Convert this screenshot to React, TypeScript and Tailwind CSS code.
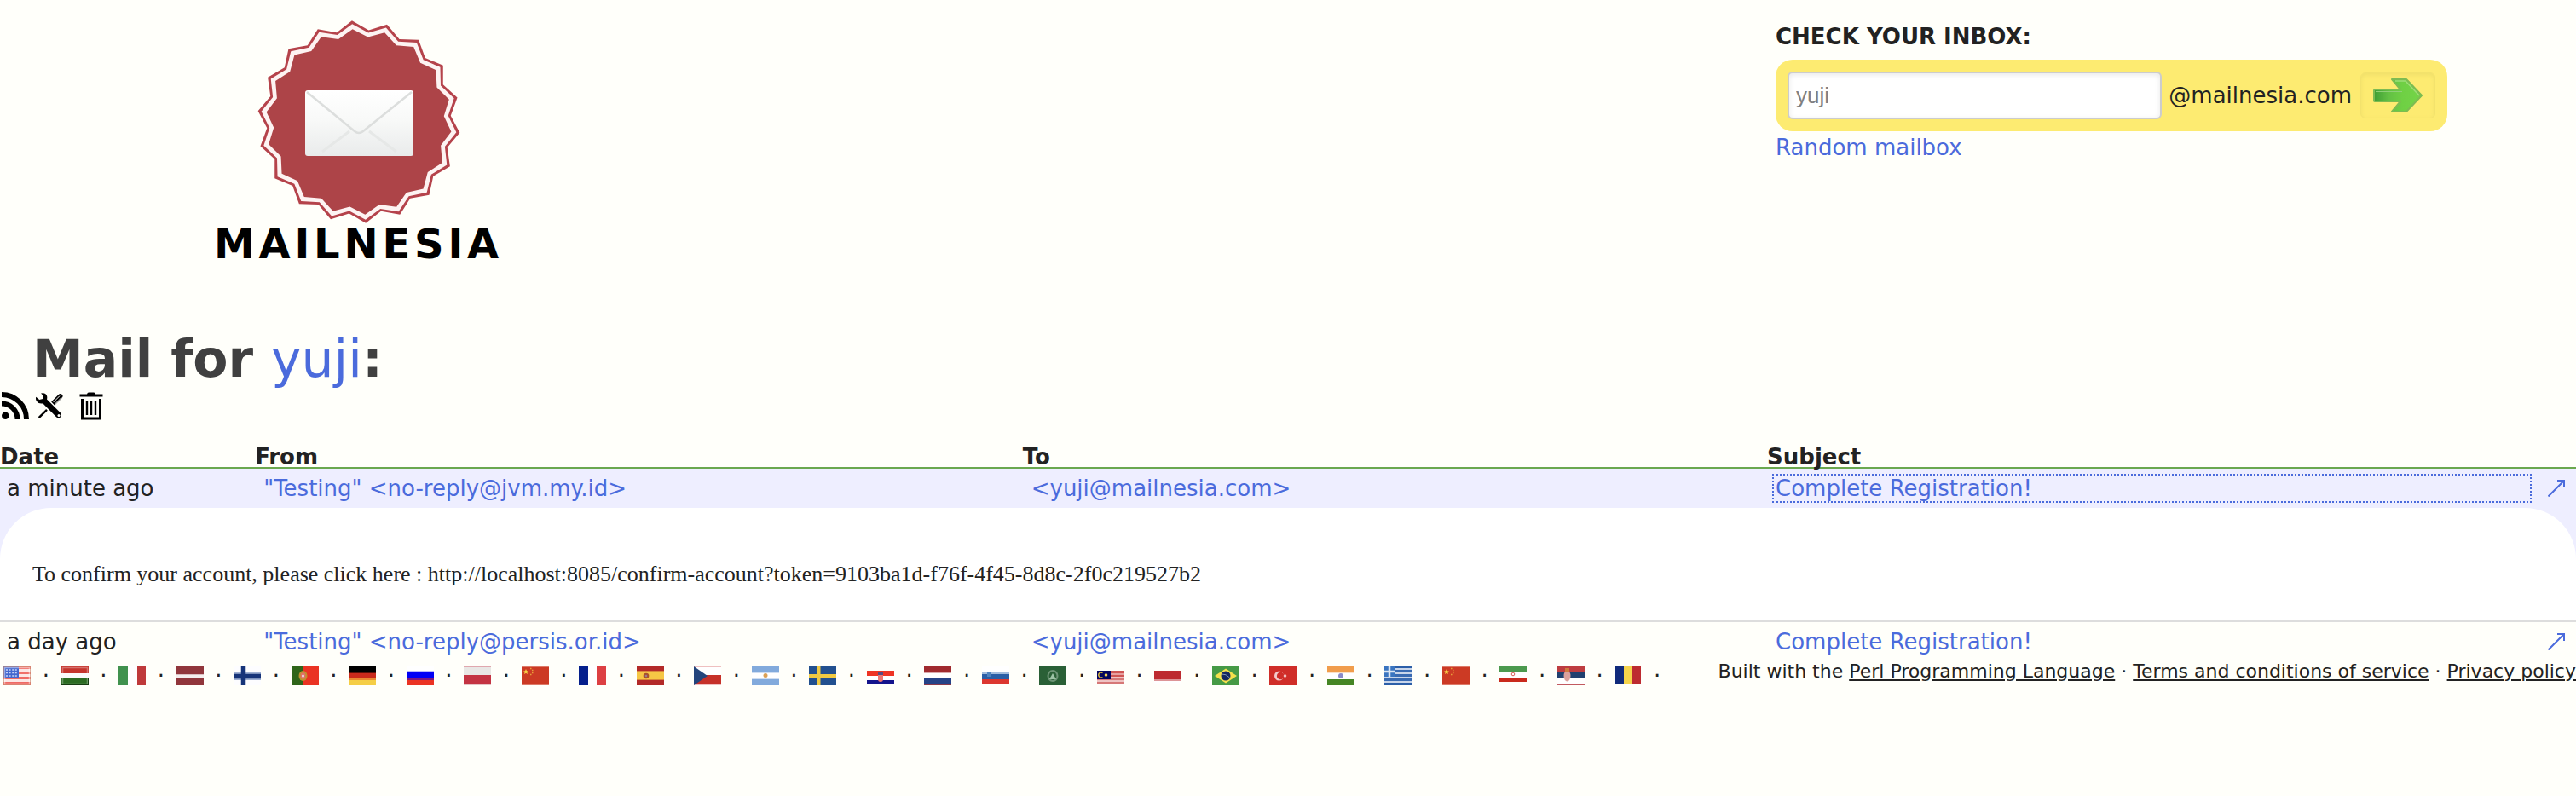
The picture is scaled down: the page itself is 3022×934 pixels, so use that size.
import React from "react";

const sans = "font-['Verdana','DejaVu_Sans',sans-serif]";

const BUMPS = 18;

function starPoints(cx: number, cy: number, outer: number, inner: number): string {
  const pts: string[] = [];
  for (let i = 0; i < BUMPS * 2; i++) {
    const r = i % 2 === 0 ? outer : inner;
    const a = ((-93.9 + (i * 180) / BUMPS) * Math.PI) / 180;
    pts.push(`${(cx + r * Math.cos(a)).toFixed(2)},${(cy + r * Math.sin(a)).toFixed(2)}`);
  }
  return pts.join(" ");
}

function SealLogo() {
  return (
    <svg viewBox="0 0 238 238" className="h-[238px] w-[238px]" aria-hidden="true">
      <defs>
        <linearGradient id="paper" x1="0" y1="0" x2="0" y2="1">
          <stop offset="0" stopColor="#ffffff" />
          <stop offset="0.45" stopColor="#f8f9f8" />
          <stop offset="1" stopColor="#e9ebeb" />
        </linearGradient>
      </defs>
      <polygon points={starPoints(119, 119, 119, 108)} fill="#b5434b" />
      <polygon points={starPoints(119, 119, 115, 105)} fill="#fdf3f2" />
      <polygon points={starPoints(119, 119, 109, 100)} fill="#ad4448" />
      <rect x="56" y="82" width="127" height="77" rx="3" fill="url(#paper)" />
      <path d="M76 154 L108 130 M163 154 L131 130" stroke="#e6e8e7" strokeWidth="3" fill="none" />
      <path d="M58 84 L114 130 Q119 134 124 130 L181 84" stroke="#dcdedd" strokeWidth="2.5" fill="none" />
    </svg>
  );
}

function GoArrow() {
  return (
    <svg viewBox="0 0 58 40" className="h-10 w-[58px]" aria-hidden="true">
      <defs>
        <linearGradient id="go" x1="0" y1="0" x2="1" y2="0">
          <stop offset="0" stopColor="#3f9e34" />
          <stop offset="0.3" stopColor="#62c044" />
          <stop offset="0.6" stopColor="#6fd044" />
          <stop offset="1" stopColor="#74d448" />
        </linearGradient>
      </defs>
      <path
        d="M1 14 Q1 13 2 13 H32 L22 1 H39 L57 20 L39 39 H22 L32 27 H2 Q1 27 1 26 Z"
        fill="url(#go)"
        stroke="#7dbb52"
        strokeWidth="2"
        strokeLinejoin="round"
      />
      <path d="M26 3 H38 L54 20" fill="none" stroke="#9fdc78" strokeWidth="1.5" />
      <path d="M3 15.5 H34" stroke="#8fcf78" strokeWidth="1" />
    </svg>
  );
}

function RssIcon() {
  return (
    <svg viewBox="0 0 32 32" className="h-8 w-8" aria-hidden="true">
      <circle cx="4.3" cy="27.7" r="4.3" />
      <path d="M0 13.5 A18.5 18.5 0 0 1 18.5 32 M0 3 A29 29 0 0 1 29 32" fill="none" stroke="#000" strokeWidth="6" />
    </svg>
  );
}

function ToolsIcon() {
  return (
    <svg viewBox="0 0 32 32" className="h-8 w-8" aria-hidden="true">
      <path d="M3.6 30.2 L13 20.8" stroke="#000" strokeWidth="2.4" />
      <path d="M18.2 11.4 L26.4 3.2 Q29 0.8 31 3.2 Q32.6 5 30.2 7.4 L22 15.6 Z" />
      <path d="M20.6 12 L28 4.6 M22.6 14 L30 6.6" stroke="#fffffa" strokeWidth="1" />
      <path d="M6 1.6 Q11 0 13 4.4 Q13.6 6.4 13 8.6 L29 24.6 Q31 27.4 29 29.6 Q26.6 31.4 24 29.2 L8.4 13.4 Q3.4 14.4 1 10.8 Q-0.6 8.4 0.2 5.8 L4.2 9 L8.2 8 L9 4.6 Z" />
      <circle cx="27" cy="27.6" r="1.5" fill="#fffffa" />
    </svg>
  );
}

function TrashIcon() {
  return (
    <svg viewBox="0 0 28 33" className="h-[33px] w-7" aria-hidden="true">
      <path d="M0.5 2.5 H9 Q9.5 0.5 11 0.5 H17 Q18.5 0.5 19 2.5 H27.5 V5.5 H0.5 Z" />
      <path d="M3.5 8 V31 H24.5 V8" fill="none" stroke="#000" strokeWidth="3" />
      <path d="M9 11 V27 M14 11 V27 M19 11 V27" stroke="#000" strokeWidth="2.4" />
    </svg>
  );
}

function OpenIcon() {
  return (
    <svg viewBox="0 0 20 20" className="h-5 w-5" aria-hidden="true">
      <path d="M0.5 19.5 L18.5 1.5 M11 1 H19 V9" fill="none" stroke="#4b6bdc" strokeWidth="2" />
    </svg>
  );
}

type Band = [string, number];

function HBands({ bands }: { bands: Band[] }) {
  let y = 0;
  return (
    <>
      {bands.map(([color, h], i) => {
        const top = y;
        y += h;
        return <rect key={i} x="0" y={top} width="32" height={h} fill={color} />;
      })}
    </>
  );
}

function VBands({ bands }: { bands: Band[] }) {
  let x = 0;
  return (
    <>
      {bands.map(([color, w], i) => {
        const left = x;
        x += w;
        return <rect key={i} x={left} y="0" width={w} height="22" fill={color} />;
      })}
    </>
  );
}

function China() {
  return (
    <>
      <rect width="32" height="22" fill="#cc3a24" />
      <path d="M0 0.5 H32 M0 21.5 H32" stroke="#dd7a68" />
      <path d="M5 3 L6 5.2 L8 5.4 L6.4 6.8 L7 9 L5 7.7 L3 9 L3.6 6.8 L2 5.4 L4 5.2 Z" fill="#f8d347" />
      <path d="M10 2.5 h1.5 M12 4.5 h1.5 M12 7.5 h1.5 M10 9.5 h1.5" stroke="#e8a03a" strokeWidth="1.5" />
    </>
  );
}

const flags: { name: string; art: React.ReactNode }[] = [
  {
    name: "English",
    art: (
      <>
        <HBands bands={[["#f0706a", 3], ["#fbe6e4", 3], ["#f0706a", 3], ["#fbe6e4", 3], ["#ef6a64", 3], ["#fbe6e4", 3], ["#ef6a64", 4]]} />
        <rect width="18" height="14" fill="#4467cf" />
        <path d="M3 4 h13 M3 7.5 h13 M3 11 h13" stroke="#c8d4f6" strokeWidth="1.5" strokeDasharray="2 1.6" />
        <rect x="1.5" y="1.5" width="29" height="19" fill="none" stroke="#fff" strokeOpacity="0.45" strokeWidth="1.5" />
        <rect x="0.5" y="0.5" width="31" height="21" fill="none" stroke="#c98a70" strokeOpacity="0.6" />
      </>
    ),
  },
  {
    name: "Magyar",
    art: (
      <>
        <HBands bands={[["#c5352d", 8], ["#fbfbfb", 6], ["#2c6b22", 8]]} />
        <rect x="1.5" y="1.5" width="29" height="19" fill="none" stroke="#fff" strokeOpacity="0.3" strokeWidth="1.5" />
        <path d="M0 21.5 H32 M31.5 14 V22" stroke="#173d12" />
      </>
    ),
  },
  { name: "Italiano", art: <VBands bands={[["#41924e", 11], ["#ffffff", 11], ["#bf3a3b", 10]]} /> },
  { name: "Latviešu", art: <HBands bands={[["#91363c", 9], ["#dcc0c2", 1], ["#f5eeee", 3], ["#dcc0c2", 1], ["#91363c", 8]]} /> },
  {
    name: "Suomi",
    art: (
      <>
        <rect width="32" height="22" fill="#fdfdff" />
        <path d="M0 11.5 H32" stroke="#9fb0d2" strokeWidth="9" />
        <path d="M0 11.5 H32 M11.5 0 V22" stroke="#163479" strokeWidth="5.5" />
      </>
    ),
  },
  {
    name: "Português",
    art: (
      <>
        <VBands bands={[["#2f6519", 14], ["#ea3323", 18]]} />
        <ellipse cx="13.5" cy="11" rx="5" ry="6" fill="#c0902f" />
        <ellipse cx="13.5" cy="11" rx="3" ry="3.8" fill="#e27165" />
        <circle cx="13.5" cy="11" r="1.5" fill="#e8dbe8" />
      </>
    ),
  },
  { name: "Deutsch", art: <HBands bands={[["#000000", 6], ["#5a1009", 2], ["#c92a1c", 6], ["#e98a31", 2], ["#f5ce46", 6]]} /> },
  { name: "Русский", art: <HBands bands={[["#ffffff", 5], ["#b9b9fb", 2], ["#0000f5", 7], ["#7b1880", 2], ["#eb3323", 6]]} /> },
  { name: "Polski", art: <HBands bands={[["#e0a7ae", 1], ["#e9e7e5", 9], ["#c43443", 10], ["#e5c3c5", 2]]} /> },
  { name: "中文", art: <China /> },
  { name: "Français", art: <VBands bands={[["#06208c", 11], ["#ffffff", 10], ["#dd4043", 11]]} /> },
  {
    name: "Español",
    art: (
      <>
        <HBands bands={[["#b32a28", 5], ["#d9883a", 1], ["#f6c745", 9], ["#d9883a", 1], ["#b32a28", 6]]} />
        <circle cx="11" cy="11" r="3.3" fill="#a8502c" />
        <circle cx="11" cy="11" r="1.3" fill="#9a7a8f" />
      </>
    ),
  },
  {
    name: "Čeština",
    art: (
      <>
        <HBands bands={[["#efc0c0", 1], ["#ffffff", 9], ["#c63129", 10], ["#efc0c0", 2]]} />
        <path d="M0 0 L16 11 L0 22 Z" fill="#23457c" />
      </>
    ),
  },
  {
    name: "Argentina",
    art: (
      <>
        <HBands bands={[["#82aadc", 6], ["#cfdef2", 2], ["#ffffff", 5], ["#cfdef2", 2], ["#82aadc", 7]]} />
        <circle cx="16" cy="10.5" r="2.5" fill="#dba055" />
      </>
    ),
  },
  {
    name: "Svenska",
    art: (
      <>
        <rect width="32" height="22" fill="#22508f" />
        <path d="M0 11 H32 M11.5 0 V22" stroke="#f1ca42" strokeWidth="4" />
      </>
    ),
  },
  {
    name: "Hrvatski",
    art: (
      <g transform="translate(0 5)">
        <HBands bands={[["#ee3424", 6], ["#ffffff", 5], ["#14148c", 5]]} />
        <rect x="13" y="3" width="6" height="10" rx="3" fill="#ee7570" />
        <rect x="13" y="2" width="6" height="3" fill="#5a4a80" />
      </g>
    ),
  },
  { name: "Nederlands", art: <HBands bands={[["#a02a2e", 7], ["#d9a9ab", 1], ["#ffffff", 6], ["#264387", 7], ["#8a3a4a", 1]]} /> },
  {
    name: "Slovenščina",
    art: (
      <>
        <HBands bands={[["#ffffff", 7], ["#a3bddd", 2], ["#2a5fa6", 6], ["#dc372f", 6]]} />
        <rect x="6" y="7" width="4" height="5" fill="#4f83bd" />
      </>
    ),
  },
  {
    name: "العربية",
    art: (
      <>
        <rect width="32" height="22" fill="#2a6036" />
        <ellipse cx="16" cy="11" rx="5.5" ry="6" fill="none" stroke="#6d9475" strokeWidth="2" />
        <path d="M12 15 L16 8 L20 15 Z" fill="#9dc3a5" />
      </>
    ),
  },
  {
    name: "Melayu",
    art: (
      <g transform="translate(0 5)">
        <HBands bands={[["#cf5553", 3], ["#e6a09f", 2], ["#cf5553", 2], ["#efc3c2", 2], ["#d67877", 2], ["#efc3c2", 2], ["#d67877", 3]]} />
        <rect width="16" height="10" fill="#06065f" />
        <path d="M6.5 2.5 A3 3 0 1 0 6.5 7.5" fill="none" stroke="#d5b53c" strokeWidth="1.5" />
        <circle cx="10.5" cy="5" r="1.8" fill="#efd050" />
      </g>
    ),
  },
  {
    name: "Indonesia",
    art: (
      <g transform="translate(0 5)">
        <HBands bands={[["#bd2b30", 10], ["#dd9597", 2], ["#ffffff", 4]]} />
      </g>
    ),
  },
  {
    name: "Brasil",
    art: (
      <>
        <rect width="32" height="22" fill="#469a45" />
        <path d="M3 11 L16 2.5 L29 11 L16 19.5 Z" fill="#f4e04c" />
        <circle cx="16" cy="11" r="5.5" fill="#12275f" />
        <path d="M11.5 9 Q16 8.5 20.5 13" fill="none" stroke="#7f94b5" strokeWidth="1" />
      </>
    ),
  },
  {
    name: "Türkçe",
    art: (
      <>
        <rect width="32" height="22" fill="#d02e28" />
        <circle cx="11.5" cy="11" r="5.5" fill="#f2cccb" />
        <circle cx="13.2" cy="11" r="4.3" fill="#d02e28" />
        <circle cx="18.5" cy="11" r="1.8" fill="#f0c0be" />
      </>
    ),
  },
  {
    name: "हिन्दी",
    art: (
      <>
        <HBands bands={[["#f19d4b", 7], ["#fae0c8", 1], ["#ffffff", 7], ["#468624", 7]]} />
        <circle cx="16" cy="11" r="3" fill="#8b8bc8" />
      </>
    ),
  },
  {
    name: "Ελληνικά",
    art: (
      <>
        <HBands bands={[["#2c5fa8", 2], ["#c9d6ea", 2], ["#3a6bb2", 3], ["#c9d6ea", 2], ["#3a6bb2", 3], ["#c9d6ea", 2], ["#3a6bb2", 3], ["#c9d6ea", 2], ["#2c5fa8", 3]]} />
        <rect width="12" height="12" fill="#3a75c0" />
        <path d="M0 6 H12 M6 0 V12" stroke="#dbe6f3" strokeWidth="2.5" />
      </>
    ),
  },
  { name: "繁體中文", art: <China /> },
  {
    name: "فارسی",
    art: (
      <>
        <HBands bands={[["#4c9a4e", 6], ["#ffffff", 7], ["#c92a1c", 5]]} />
        <circle cx="16" cy="9" r="1.8" fill="none" stroke="#d86058" />
      </>
    ),
  },
  {
    name: "Српски",
    art: (
      <>
        <HBands bands={[["#be3d40", 6], ["#21406f", 7], ["#ffffff", 7], ["#c25a60", 2]]} />
        <ellipse cx="11.5" cy="11" rx="4" ry="6.5" fill="#dba09c" />
        <rect x="9" y="2" width="5" height="4" fill="#cf7b3e" />
      </>
    ),
  },
  {
    name: "Română",
    art: (
      <>
        <rect x="1" width="10" height="20" fill="#102a7b" />
        <rect x="11" width="10" height="20" fill="#f5d44c" />
        <rect x="21" width="10" height="20" fill="#bd2b30" />
      </>
    ),
  },
];

const link = "text-[#4b6bdc]";
const headCell = "border-b-2 border-[#6aa84f] p-0 pt-1 font-bold";

function MailRow({ date, from, active }: { date: string; from: string; active?: boolean }) {
  return (
    <tr className={active ? "h-[46px] bg-[#eeeeff]" : "h-[46px]"}>
      <td className="p-0 pl-2">{date}</td>
      <td className="p-0 pl-2.5">
        <a href="#mail" className={link}>{from}</a>
      </td>
      <td className="p-0 pl-2.5">
        <a href="#mail" className={link}>&lt;yuji@mailnesia.com&gt;</a>
      </td>
      <td className="p-0 pl-1.5">
        <a
          href="#mail"
          className={
            active
              ? "block border-2 border-dotted border-[#4b6bdc] pl-0.5 leading-[30px] text-[#4b6bdc]"
              : "block border-2 border-transparent pl-0.5 leading-[30px] text-[#4b6bdc]"
          }
        >
          Complete Registration!
        </a>
      </td>
      <td className="p-0">
        <a href="#open" aria-label="Open in new window" className="flex justify-end pr-[13px]">
          <OpenIcon />
        </a>
      </td>
    </tr>
  );
}

export default function App() {
  return (
    <div className={`min-h-screen bg-[#fffffa] text-[26px] leading-8 text-[#222222] ${sans}`}>
      <header className="flex h-[384px] justify-between pt-6">
        <a href="#home" className="ml-[240px] flex w-[361px] flex-col items-center text-black">
          <SealLogo />
          <span className="text-5xl font-bold tracking-widest">MAILNESIA</span>
        </a>
        <form className="-mt-0.5 mr-[151px] w-[788px]" onSubmit={(e) => e.preventDefault()}>
          <label htmlFor="mailbox" className="block pb-1.5 leading-[42px] font-bold">
            CHECK YOUR INBOX:
          </label>
          <div className="flex h-[84px] items-center gap-2 rounded-[20px] bg-[#fdeb71] px-3.5">
            <input
              id="mailbox"
              type="text"
              placeholder="yuji"
              className="h-14 min-w-0 flex-1 rounded-md border-2 border-[#cccccc] bg-white px-2 font-['Liberation_Sans',sans-serif] shadow-[inset_0_2px_6px_#e8e8e8] placeholder:text-[#808080]"
            />
            <span>@mailnesia.com</span>
            <button
              type="submit"
              aria-label="Go to mailbox"
              className="ml-0.5 flex h-[54px] w-[88px] items-center justify-center rounded-md border border-[#f3e26c] shadow-[inset_0_2px_5px_#efdf6a]"
            >
              <GoArrow />
            </button>
          </div>
          <a href="#random" className={`block pt-0.5 leading-[34px] ${link}`}>Random mailbox</a>
        </form>
      </header>

      <main>
        <h1 className="pl-[38px] text-[60px] leading-[74px] font-bold text-[#404040]">
          Mail for <a href="#yuji" className="font-normal text-[#4b6bdc]">yuji</a>:
        </h1>
        <nav className="flex h-[62px] items-start pt-0.5 pl-0.5">
          <a href="#rss" aria-label="RSS feed"><RssIcon /></a>
          <a href="#settings" aria-label="Settings" className="ml-2"><ToolsIcon /></a>
          <a href="#delete" aria-label="Delete" className="ml-[19px]"><TrashIcon /></a>
        </nav>

        <table className="w-full table-fixed border-separate border-spacing-0">
          <colgroup>
            <col className="w-[9.9%]" />
            <col className="w-[29.8%]" />
            <col className="w-[28.9%]" />
            <col />
            <col className="w-[52px]" />
          </colgroup>
          <thead>
            <tr className="text-left leading-6">
              <th scope="col" className={headCell}>Date</th>
              <th scope="col" className={headCell}>From</th>
              <th scope="col" className={headCell}>To</th>
              <th scope="col" colSpan={2} className={headCell}>Subject</th>
            </tr>
          </thead>
          <tbody>
            <MailRow date="a minute ago" from={'"Testing" <no-reply@jvm.my.id>'} active />
            <tr className="bg-[#eeeeff]">
              <td colSpan={5} className="border-b-2 border-[#dddddd] p-0">
                <div className="rounded-t-[60px] bg-white px-[38px] pt-[62px] pb-[38px] font-['Liberation_Serif',serif]">
                  To confirm your account, please click here :
                  http://localhost:8085/confirm-account?token=9103ba1d-f76f-4f45-8d8c-2f0c219527b2
                </div>
              </td>
            </tr>
            <MailRow date="a day ago" from={'"Testing" <no-reply@persis.or.id>'} />
          </tbody>
        </table>
      </main>

      <footer className="flex items-start justify-between">
        <ul className="grid w-[1962px] grid-cols-[repeat(29,1fr)] pt-1.5 pl-1">
          {flags.map((f) => (
            <li key={f.name} className="flex items-center">
              <a href="#language" aria-label={f.name}>
                <svg viewBox="0 0 32 22" className="block h-[22px] w-8" aria-hidden="true">{f.art}</svg>
              </a>
              <span className="flex-1 text-center leading-[22px]">·</span>
            </li>
          ))}
        </ul>
        <p className="text-[22px] leading-6 whitespace-nowrap">
          Built with the <a href="#perl" className="underline">Perl Programming Language</a> ·{" "}
          <a href="#terms" className="underline">Terms and conditions of service</a> ·{" "}
          <a href="#privacy" className="underline">Privacy policy</a>
        </p>
      </footer>
    </div>
  );
}
